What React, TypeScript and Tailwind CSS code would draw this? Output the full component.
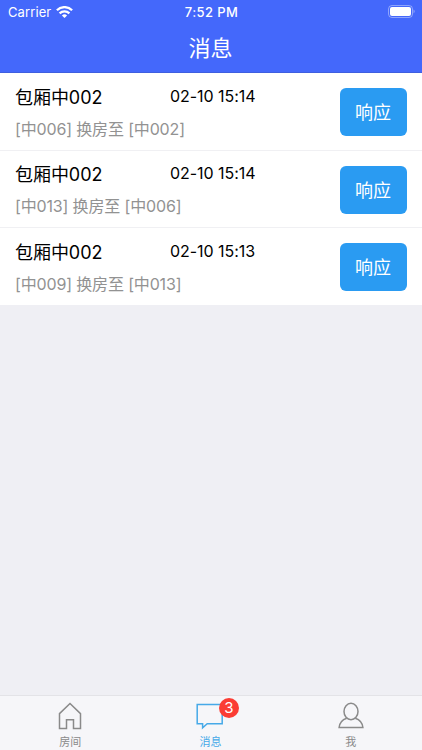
interface Message {
  id: number;
  room: string;
  time: string;
  from: string;
  to: string;
}

const messages: Message[] = [
  { id: 1, room: "包厢中002", time: "02-10 15:14", from: "中006", to: "中002" },
  { id: 2, room: "包厢中002", time: "02-10 15:14", from: "中013", to: "中006" },
  { id: 3, room: "包厢中002", time: "02-10 15:13", from: "中009", to: "中013" },
];

function StatusBar() {
  return (
    <div className="grid h-6 grid-cols-3 items-center pl-2 pr-[7px] text-[13px] leading-6 text-white">
      <div className="flex items-center gap-[5px]">
        <span className="tracking-[0.1px]">Carrier</span>
        <svg width="17" height="12" viewBox="0 0 17 12" fill="none" stroke="currentColor" strokeWidth="2.3">
          <path d="M.9 4.2a10.9 10.9 0 0 1 15.2 0" />
          <path d="M3.6 7.4a7 7 0 0 1 9.8 0" />
          <path d="M8.5 12 5.9 9.5a3.7 3.7 0 0 1 5.2 0z" fill="currentColor" stroke="none" />
        </svg>
      </div>
      <span className="text-center font-medium tracking-[0.4px]">7:52 PM</span>
      <svg className="mb-[2px] justify-self-end" width="27" height="13" viewBox="0 0 27 13">
        <rect x="0.5" y="0.5" width="24" height="12" rx="3.5" fill="none" stroke="white" strokeOpacity="0.4" />
        <rect x="2" y="2" width="21" height="9" rx="2" fill="white" />
        <path d="M25.6 4.6c1.3.5 1.3 3.3 0 3.8z" fill="white" fillOpacity="0.5" />
      </svg>
    </div>
  );
}

function MessageRow({ message }: { message: Message }) {
  return (
    <li className="flex h-[77.5px] items-center border-b border-[#f0f0f3] bg-white px-[15px] pt-[2px] last:border-[#efeff4]">
      <div className="flex-1">
        <div className="flex h-[26px] items-center">
          <span className="w-[155px] pt-px text-[18px] tracking-[-0.05px] text-black">{message.room}</span>
          <span className="pb-[2px] text-[16px] tracking-[-0.05px] text-black">{message.time}</span>
        </div>
        <p className="mt-[7px] h-6 text-[16px] leading-6 tracking-[-0.15px] text-[#929292]">
          [{message.from}] 换房至 [{message.to}]
        </p>
      </div>
      <button className="h-12 w-[67px] rounded-md bg-[#2a9bf2] pr-px pt-px text-[18px] text-white">响应</button>
    </li>
  );
}

function TabBar() {
  return (
    <nav className="grid h-[55px] grid-cols-3 border-t border-[#e3e3e7] bg-[#f6f6f9] pr-px text-[11px] text-[#8a8a8a]">
      <a className="flex flex-col items-center pt-[5px]">
        <svg width="26" height="30" viewBox="0 0 26 30" fill="none" stroke="currentColor" strokeWidth="1.5">
          <path d="M2.5 12.6 13 2.5l10.5 10.1v14.9h-7v-8.8h-7v8.8h-7z" />
        </svg>
        <span className="mt-[3px] leading-4">房间</span>
      </a>
      <a className="flex flex-col items-center pt-[5px] text-[#46a9e8]">
        <span className="relative">
          <svg width="28" height="30" viewBox="0 0 28 30" fill="none" stroke="currentColor" strokeWidth="1.5">
            <path d="M1.2 3.5h25v19.3H11.2l-4.6 4v-4H1.2z" />
          </svg>
          <span className="absolute -top-[3px] left-[22.5px] h-5 w-5 rounded-full bg-[#fb3c34] text-center text-[15px] leading-5 text-white">
            3
          </span>
        </span>
        <span className="mt-[3px] leading-4">消息</span>
      </a>
      <a className="flex flex-col items-center pt-[5px]">
        <svg width="28" height="30" viewBox="0 0 28 30" fill="none" stroke="currentColor" strokeWidth="1.5">
          <ellipse cx="14" cy="10.5" rx="7" ry="8.2" />
          <path d="M9.7 17.2C5.6 18.6 2.6 21.5 2.1 26.5h23.8c-.5-5-3.5-7.9-7.6-9.3" />
        </svg>
        <span className="mt-[3px] leading-4">我</span>
      </a>
    </nav>
  );
}

export default function App() {
  return (
    <div className="flex h-screen w-full flex-col bg-[#efeff4] font-['Inter','Noto_Sans_CJK_SC',sans-serif]">
      <header className="h-[73px] border-b border-[#3f5fdf] bg-[#4468fb]">
        <StatusBar />
        <h1 className="pr-px pt-[6px] text-center text-[22px] leading-9 text-white">消息</h1>
      </header>
      <ul className="flex-1">
        {messages.map((message) => (
          <MessageRow key={message.id} message={message} />
        ))}
      </ul>
      <TabBar />
    </div>
  );
}
